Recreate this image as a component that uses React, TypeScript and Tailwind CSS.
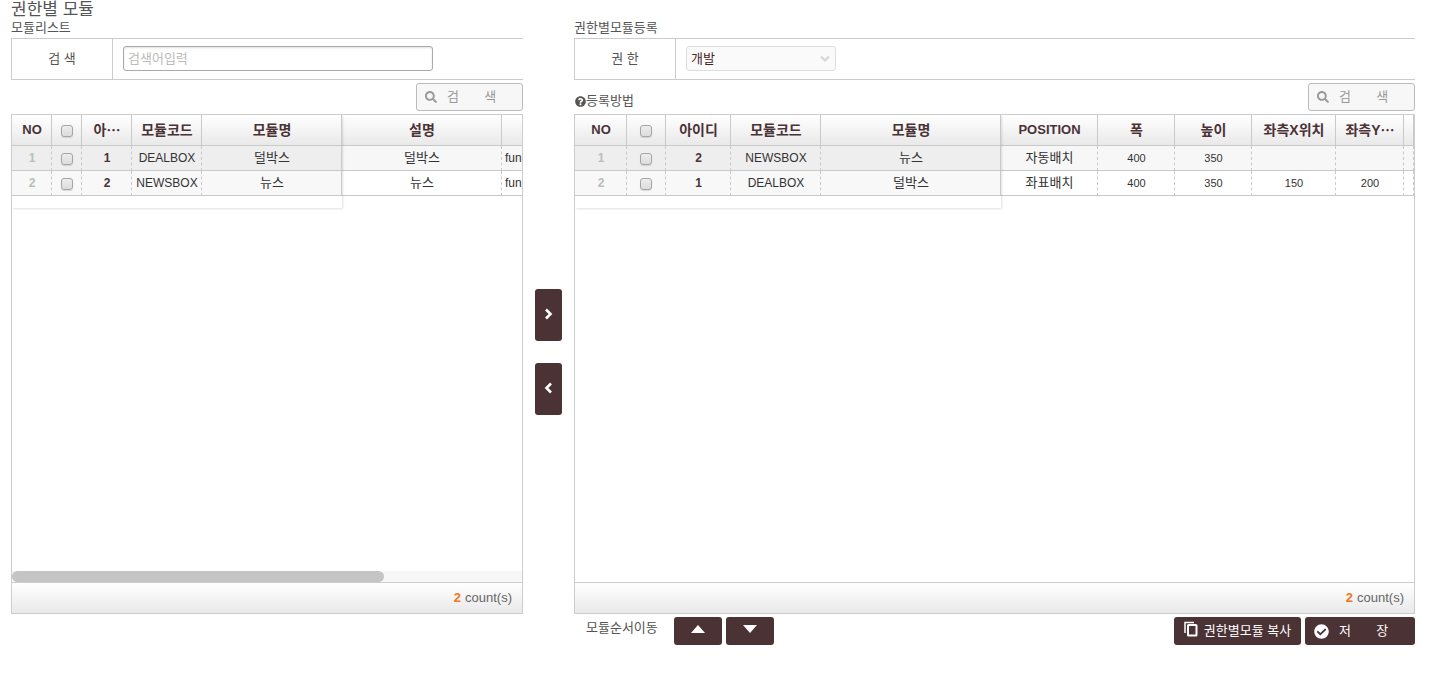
import type { ReactNode } from "react";
import { FaCheckCircle, FaQuestionCircle, FaSearch } from "react-icons/fa";

type Kind = "no" | "check" | "id" | "code" | "text" | "num" | "clip";

interface Column {
  label: string;
  kind: Kind;
  width: string;
  shortened?: boolean;
  frozen?: boolean;
  lastFrozen?: boolean;
}

const moduleColumns: Column[] = [
  { label: "NO", kind: "no", width: "w-[40px]", frozen: true },
  { label: "", kind: "check", width: "w-[30px]", frozen: true },
  { label: "아", kind: "id", width: "w-[50px]", shortened: true, frozen: true },
  { label: "모듈코드", kind: "code", width: "w-[70px]", frozen: true },
  { label: "모듈명", kind: "text", width: "w-[140px]", frozen: true, lastFrozen: true },
  { label: "설명", kind: "text", width: "w-[160px]" },
  { label: "", kind: "clip", width: "w-[209px]" },
];

const moduleRows = [
  ["1", "", "1", "DEALBOX", "덜박스", "덜박스", "fun"],
  ["2", "", "2", "NEWSBOX", "뉴스", "뉴스", "fun"],
];

const roleColumns: Column[] = [
  { label: "NO", kind: "no", width: "w-[52px]", frozen: true },
  { label: "", kind: "check", width: "w-[39px]", frozen: true },
  { label: "아이디", kind: "id", width: "w-[65px]", frozen: true },
  { label: "모듈코드", kind: "code", width: "w-[90px]", frozen: true },
  { label: "모듈명", kind: "text", width: "w-[180px]", frozen: true, lastFrozen: true },
  { label: "POSITION", kind: "text", width: "w-[97px]" },
  { label: "폭", kind: "num", width: "w-[77px]" },
  { label: "높이", kind: "num", width: "w-[77px]" },
  { label: "좌측X위치", kind: "num", width: "w-[84px]" },
  { label: "좌측Y", kind: "num", width: "w-[68px]", shortened: true },
  { label: "", kind: "clip", width: "w-auto" },
];

const roleRows = [
  ["1", "", "2", "NEWSBOX", "뉴스", "자동배치", "400", "350", "", "", ""],
  ["2", "", "1", "DEALBOX", "덜박스", "좌표배치", "400", "350", "150", "200", ""],
];

const cellStyle: Record<Kind, string> = {
  no: "pl-px text-center text-xs font-bold text-[#b9beb9]",
  check: "text-center text-[#333]",
  id: "pl-px text-center text-xs font-bold text-[#4b3235]",
  code: "pl-px text-center text-xs text-[#333]",
  text: "pl-px text-center text-[13px] text-[#333]",
  num: "pl-px text-center text-[11px] text-[#333]",
  clip: "pl-[3px] text-left text-xs text-[#333]",
};

function Tick({ label }: { label: string }) {
  return (
    <input
      type="checkbox"
      aria-label={label}
      className="mx-auto mt-px block size-3 appearance-none rounded-[3px] border border-[#a5a5a5] bg-linear-to-b from-[#ededed] to-[#dcdcdc] shadow-[0_1px_1px_rgba(0,0,0,0.12)] checked:from-[#888] checked:to-[#666]"
    />
  );
}

function Grid({
  columns,
  rows,
  tableWidth,
  frozenWidth,
  scroll,
}: {
  columns: Column[];
  rows: string[][];
  tableWidth: string;
  frozenWidth: string;
  scroll?: boolean;
}) {
  return (
    <div className="border border-[#ccc]">
      <div className="flex h-[467px] flex-col overflow-hidden">
        <div className="relative grow overflow-hidden">
          <table className={`${tableWidth} table-fixed border-separate border-spacing-0`}>
            <thead>
              <tr className="h-[31px]">
                {columns.map((c, i) => (
                  <th
                    key={i}
                    className={`${c.width} overflow-hidden border-r border-b border-[#c9c9c9] bg-linear-to-b from-white to-[#e9e9e9] py-0 pr-0 text-center font-bold whitespace-nowrap text-[#4b3235] ${
                      /^[A-Z]+$/.test(c.label) ? "text-[13px]" : "text-sm"
                    } ${c.kind === "check" ? "pl-0" : "pl-px"} leading-5`}
                  >
                    {c.kind === "check" ? <Tick label="전체 선택" /> : c.label}
                    {c.shortened && (
                      <span
                        lang="ja"
                        className="inline-block font-['Noto_Sans_CJK_JP',sans-serif] leading-none"
                      >
                        ⋯
                      </span>
                    )}
                  </th>
                ))}
              </tr>
            </thead>
            <tbody>
              {rows.map((row, r) => (
                <tr key={r} className="h-[25px]">
                  {columns.map((c, i) => (
                    <td
                      key={i}
                      className={`overflow-hidden border-r border-b border-[#c9c9c9] py-0 pr-0 leading-5 whitespace-nowrap ${
                        c.lastFrozen ? "" : "[border-right-style:dashed]"
                      } ${
                        c.frozen
                          ? r === 0
                            ? "bg-[#eee]"
                            : "bg-[#f8f8f8]"
                          : r === 0
                            ? "bg-[#f7f7f7]"
                            : "bg-white"
                      } ${cellStyle[c.kind]}`}
                    >
                      {c.kind === "check" ? <Tick label={`${row[0]}행 선택`} /> : row[i]}
                    </td>
                  ))}
                </tr>
              ))}
            </tbody>
          </table>
          <div
            className={`pointer-events-none absolute top-0 left-0 h-[93px] ${frozenWidth} shadow-[1px_1px_2px_rgba(0,0,0,0.12)]`}
          />
        </div>
        {scroll && (
          <div className="h-[11px] bg-[#f7f7f7]">
            <div className="h-full w-[73%] rounded-full bg-[#c5c5c5]" />
          </div>
        )}
      </div>
      <div className="flex h-[31px] items-center justify-end gap-1 border-t border-[#ccc] bg-linear-to-b from-white to-[#e9e9e9] pr-[10px] text-[13px] text-[#666]">
        <b className="text-[#f47421]">{rows.length}</b>
        <span>count(s)</span>
      </div>
    </div>
  );
}

function FormRow({ id, label, children }: { id: string; label: string; children: ReactNode }) {
  return (
    <div className="flex h-[42px] border-y border-l border-[#ccc]">
      <label
        htmlFor={id}
        className="flex w-[101px] shrink-0 items-center justify-center border-r border-[#ccc]"
      >
        {label}
      </label>
      <div className="flex items-start px-[10px] pt-[7px]">{children}</div>
    </div>
  );
}

function SearchButton() {
  return (
    <button
      type="button"
      className="flex h-7 w-[107px] items-center rounded-[3px] border border-[#bbb] bg-[#f7f7f7] pl-2 text-[#999]"
    >
      <FaSearch className="mr-[10px] size-3" />
      <span className="whitespace-pre">{"검       색"}</span>
    </button>
  );
}

const dark = "flex items-center justify-center rounded-[3px] bg-[#4b3235] text-white";

function Chevron({ points }: { points: string }) {
  return (
    <svg
      viewBox="0 0 10 12"
      className="h-3 w-[10px]"
      fill="none"
      stroke="currentColor"
      strokeWidth="2.6"
    >
      <polyline points={points} />
    </svg>
  );
}

export default function App() {
  return (
    <main className="pr-5 pl-[11px] font-['Liberation_Sans','Noto_Sans_CJK_KR',sans-serif] text-[13px] leading-5 text-[#555]">
      <h1 className="h-[18px] text-[17px] leading-5">권한별 모듈</h1>
      <div className="grid grid-cols-[minmax(0,512fr)_51px_minmax(0,841fr)]">
        <section>
          <h2 className="h-5">모듈리스트</h2>
          <FormRow id="keyword" label="검 색">
            <input
              id="keyword"
              type="text"
              placeholder="검색어입력"
              className="h-[25px] w-[310px] rounded-[3px] border border-[#aaa] px-1 shadow-[inset_0_1px_2px_rgba(0,0,0,0.12)] placeholder:text-[#bbb]"
            />
          </FormRow>
          <div className="flex h-[34px] items-center justify-end">
            <SearchButton />
          </div>
          <Grid
            columns={moduleColumns}
            rows={moduleRows}
            tableWidth="w-[699px]"
            frozenWidth="w-[330px]"
            scroll
          />
        </section>

        <div className="flex flex-col items-center gap-[22px] pt-[271px]">
          <button type="button" aria-label="추가" className={`${dark} h-[52px] w-[27px] pb-[3px]`}>
            <Chevron points="2,1.5 6.5,6 2,10.5" />
          </button>
          <button type="button" aria-label="제거" className={`${dark} h-[52px] w-[27px] pb-[3px]`}>
            <Chevron points="7,1.5 2.5,6 7,10.5" />
          </button>
        </div>

        <section>
          <h2 className="h-5">권한별모듈등록</h2>
          <FormRow id="role" label="권 한">
            <div className="relative">
              <select
                id="role"
                className="h-[25px] w-[150px] appearance-none rounded-[3px] border border-[#ddd] bg-[#fafafa] px-1 text-[#4b2025]"
              >
                <option>개발</option>
              </select>
              <svg
                viewBox="0 0 10 8"
                className="pointer-events-none absolute top-[9px] right-[6px] h-2 w-[10px]"
                fill="none"
                stroke="#d5d5d5"
                strokeWidth="2"
              >
                <polyline points="1,1.5 5,5.5 9,1.5" />
              </svg>
            </div>
          </FormRow>
          <div className="flex h-[34px] items-center justify-between">
            <a href="#guide" className="flex items-center self-end pb-[3px] pl-px">
              <FaQuestionCircle className="size-[11px]" />
              등록방법
            </a>
            <SearchButton />
          </div>
          <Grid
            columns={roleColumns}
            rows={roleRows}
            tableWidth="w-full"
            frozenWidth="w-[426px]"
          />
          <div className="flex items-start gap-1 pt-[3px]">
            <span className="mr-3 pl-3 leading-[22px]">모듈순서이동</span>
            <button type="button" aria-label="위로" className={`${dark} h-7 w-12 pb-1`}>
              <svg viewBox="0 0 14 8" className="h-2 w-[14px]" fill="currentColor">
                <polygon points="7,0 14,8 0,8" />
              </svg>
            </button>
            <button type="button" aria-label="아래로" className={`${dark} h-7 w-12 pb-1`}>
              <svg viewBox="0 0 14 8" className="h-2 w-[14px]" fill="currentColor">
                <polygon points="0,0 14,0 7,8" />
              </svg>
            </button>
            <button type="button" className={`${dark} ml-auto h-7 w-[127px] gap-[6px]`}>
              <svg
                viewBox="0 0 14 16"
                className="mb-1 h-4 w-[14px]"
                fill="none"
                stroke="currentColor"
              >
                <path d="M1 12V1.5H10" strokeWidth="1.5" />
                <rect x="4" y="4" width="8.5" height="10.5" rx="0.5" strokeWidth="2" />
              </svg>
              권한별모듈 복사
            </button>
            <button
              type="button"
              className="flex h-7 w-[110px] items-center rounded-[3px] bg-[#4b3235] pl-[9px] text-white"
            >
              <FaCheckCircle className="mr-[10px] size-[15px]" />
              <span className="whitespace-pre">{"저       장"}</span>
            </button>
          </div>
        </section>
      </div>
    </main>
  );
}
